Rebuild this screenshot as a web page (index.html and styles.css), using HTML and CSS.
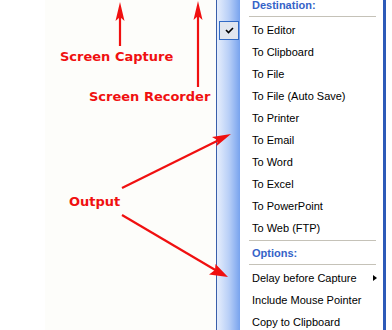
FILE: index.html
```html
<!DOCTYPE html>
<html lang="en">

<head>
    <meta charset="UTF-8">
    <meta name="viewport" content="width=device-width, initial-scale=1.0">
    <title>Output menu</title>

    <link rel="stylesheet" href="styles.css">
</head>

<body>
    <div id="pantalla">
        <div id="lienzo">
            <span class="etiqueta" id="etCaptura">Screen Capture</span>
            <span class="etiqueta" id="etGrabador">Screen Recorder</span>
            <span class="etiqueta" id="etSalida">Output</span>
        </div>

        <div id="menu">
            <div class="titulo">Destination:</div>
            <div class="separador"></div>
            <div class="opcion marcada">
                <span class="caja">
                    <svg width="9" height="7" viewBox="0 0 9 7"><polyline points="1,3 3.5,5.5 8,1" fill="none" stroke="#000" stroke-width="1.6"/></svg>
                </span>
                To Editor
            </div>
            <div class="opcion">To Clipboard</div>
            <div class="opcion">To File</div>
            <div class="opcion">To File (Auto Save)</div>
            <div class="opcion">To Printer</div>
            <div class="opcion">To Email</div>
            <div class="opcion">To Word</div>
            <div class="opcion">To Excel</div>
            <div class="opcion">To PowerPoint</div>
            <div class="opcion">To Web (FTP)</div>
            <div class="separador"></div>
            <div class="titulo">Options:</div>
            <div class="separador"></div>
            <div class="opcion submenu">Delay before Capture</div>
            <div class="opcion">Include Mouse Pointer</div>
            <div class="opcion">Copy to Clipboard</div>
        </div>

        <!-- flechas encima de todo -->
        <svg id="flechas" width="392" height="330" viewBox="0 0 392 330">
            <g stroke="#f01010" stroke-width="2.2" fill="none">
                <line x1="120" y1="46" x2="120" y2="14"/>
                <line x1="198" y1="87" x2="198" y2="12"/>
                <line x1="122" y1="188" x2="219" y2="140"/>
                <line x1="122" y1="215" x2="217" y2="271"/>
            </g>
            <g fill="#f01010">
                <polygon points="120,2 124.5,21 120,17 115.5,21"/>
                <polygon points="198,1 202.5,20 198,16 193.5,20"/>
                <polygon points="231,134 216,146.5 218,140.5 212,137"/>
                <polygon points="228,277 209,274.5 215,270 215.5,264"/>
            </g>
        </svg>
    </div>
</body>

</html>
```

FILE: styles.css
```css
body, html {
    margin: 0;
    padding: 0;
    height: 100%;
    background-color: #ffffff;
}

#pantalla {
    position: relative;
    display: flex;
    align-items: flex-start;
    width: 392px;
    height: 330px;
    overflow: hidden;
}

#lienzo {
    position: relative;
    width: 216px;
    height: 330px;
    flex-shrink: 0;
    background: linear-gradient(to right, #ffffff 0, #ffffff 45px, #fdfdfa 45px);
}

.etiqueta {
    position: absolute;
    font-family: "DejaVu Sans", Verdana, sans-serif;
    font-weight: bold;
    font-size: 13px;
    line-height: 16px;
    color: #f01010;
    white-space: nowrap;
}

#etCaptura {
    left: 60px;
    top: 49px;
}

#etGrabador {
    left: 89px;
    top: 89px;
}

#etSalida {
    left: 69px;
    top: 194px;
}

#menu {
    width: 166px;
    flex-shrink: 0;
    margin-top: -5px;
    border-left: 1px solid #3a5faa;
    border-right: 3px solid #2d5ab8;
    background: linear-gradient(to right, #e6eefc 0, #b8cff7 12px, #78a3ee 23px, #ffffff 23px);
    font-family: "Liberation Sans", Tahoma, Arial, sans-serif;
    font-size: 11px;
    color: #000000;
}

.titulo {
    height: 20px;
    line-height: 20px;
    padding-left: 35px;
    font-weight: bold;
    color: #3563c8;
}

.separador {
    height: 4px;
    margin: 0 7px 0 32px;
    background: linear-gradient(#ffffff 0, #ffffff 1px, #c5c2b8 1px, #c5c2b8 2px, #ffffff 2px);
}

.opcion {
    position: relative;
    height: 22px;
    line-height: 22px;
    padding-left: 35px;
    white-space: nowrap;
}

.caja {
    position: absolute;
    left: 2px;
    top: 2px;
    width: 18px;
    height: 17px;
    display: flex;
    align-items: center;
    justify-content: center;
    border: 1px solid #316ac5;
    background-color: #e1e6ef;
}

.submenu::after {
    content: "";
    position: absolute;
    right: 6px;
    top: 8px;
    border-left: 4px solid #000000;
    border-top: 3.5px solid transparent;
    border-bottom: 3.5px solid transparent;
}

#flechas {
    position: absolute;
    left: 0;
    top: 0;
    pointer-events: none;
}
```
